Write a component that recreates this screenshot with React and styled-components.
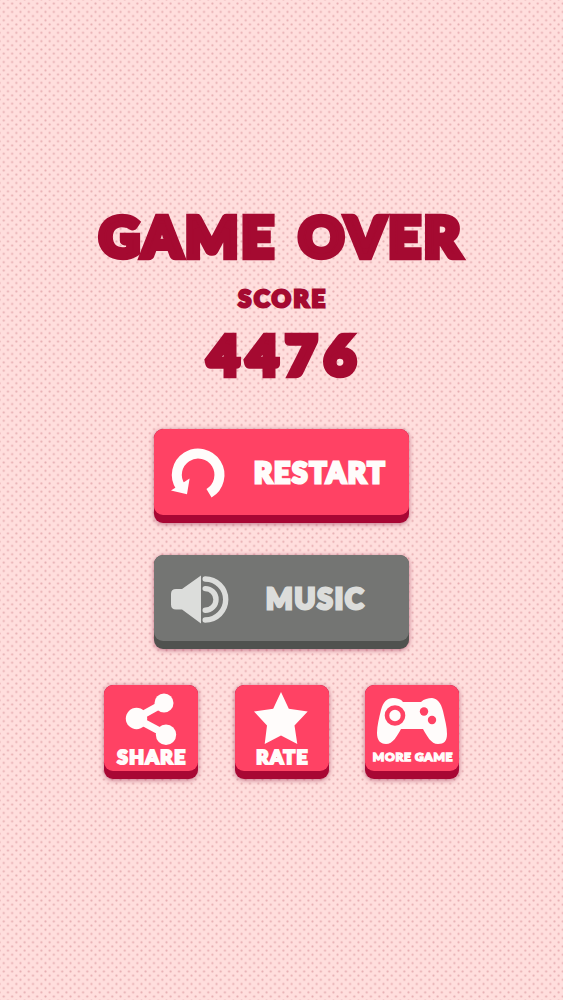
import React from 'react'
import styled, { createGlobalStyle } from 'styled-components'

const GlobalStyle = createGlobalStyle`
    * {
        box-sizing: border-box;
    }

    body {
        margin: 0;
        background: #ffdedd;
    }
`

function RestartIcon() {
    return (
        <Icon width="54" height="50" viewBox="0 0 54 50">
            <path d="M9.5 39.8 A21.3 21.3 0 1 1 38 46.2" fill="none" stroke="currentColor" strokeWidth="10" />
            <path d="M0 43.5 L18.6 31.5 L16 47.3 Z" fill="currentColor" />
        </Icon>
    )
}

function SpeakerIcon() {
    return (
        <Icon width="57" height="50" viewBox="0 0 57 50">
            <path d="M5 16 H11 L30 2.5 V50.5 L11 36.5 H5 Q0 36.5 0 31.5 V21 Q0 16 5 16 Z" fill="currentColor" />
            <g fill="none" stroke="currentColor" strokeWidth="5.4" strokeLinecap="round">
                <path d="M34.2 15.6 A10.8 10.8 0 0 1 34.2 37.2" />
                <path d="M34.2 6 A20.5 20.5 0 0 1 34.2 47" />
            </g>
        </Icon>
    )
}

function ShareIcon() {
    return (
        <Icon width="50" height="52" viewBox="0 0 50 52">
            <path d="M38 10 L10 25.5 L40 41.5" fill="none" stroke="currentColor" strokeWidth="7.5" />
            <circle cx="38" cy="10" r="9.5" fill="currentColor" />
            <circle cx="10.5" cy="25.5" r="10.7" fill="currentColor" />
            <circle cx="40" cy="41.7" r="10.2" fill="currentColor" />
        </Icon>
    )
}

function StarIcon() {
    return (
        <Icon width="54" height="52" viewBox="0 0 54 52">
            <path d="M27 -1 L34.8 15.8 L53.7 18.5 L40.5 32.5 L43.3 51 L27 42.5 L10.7 51 L13 32.5 L0 18.5 L19.2 15.8 Z" fill="currentColor" />
        </Icon>
    )
}

function GamepadIcon() {
    return (
        <Icon width="70" height="47" viewBox="0 0 70 47">
            <path
                d="M16 0 C20 0 24 1 26 4 H44 C47 1 51 0 55 0 C61 1 64 5 66 13 C68 22 70 29 70 36 C70 43 67 46 61 46 C54 46 50 38 46 31 H24 C20 38 16 46 9 46 C3 46 0 42 0 35 C0 28 2 20 4 12 C6 4 10 0 16 0 Z"
                fill="currentColor"
            />
            <circle cx="18" cy="17.5" r="8" fill="none" stroke="#ff4264" strokeWidth="4.6" />
            <circle cx="47" cy="13.5" r="4.2" fill="#ff4264" />
            <circle cx="55" cy="22" r="4.2" fill="#ff4264" />
        </Icon>
    )
}

function App() {
    return (
        <Page>
            <GlobalStyle />
            <Title>GAME OVER</Title>
            <ScoreLabel>SCORE</ScoreLabel>
            <ScoreValue>4476</ScoreValue>
            <Actions>
                <WideButton>
                    <IconSlot>
                        <RestartIcon />
                    </IconSlot>
                    <WideLabel $left={26}>RESTART</WideLabel>
                </WideButton>
                <WideButton $muted>
                    <IconSlot>
                        <SpeakerIcon />
                    </IconSlot>
                    <WideLabel $left={38}>MUSIC</WideLabel>
                </WideButton>
            </Actions>
            <Tiles>
                <Tile>
                    <TileIcon $top={8} $left={-1}>
                        <ShareIcon />
                    </TileIcon>
                    <TileLabel>SHARE</TileLabel>
                </Tile>
                <Tile>
                    <TileIcon $top={8} $left={-1}>
                        <StarIcon />
                    </TileIcon>
                    <TileLabel>RATE</TileLabel>
                </Tile>
                <Tile>
                    <TileIcon $top={13}>
                        <GamepadIcon />
                    </TileIcon>
                    <TileLabel $small>MORE GAME</TileLabel>
                </Tile>
            </Tiles>
        </Page>
    )
}

const Page = styled.main`
    width: 563px;
    height: 1000px;
    padding-top: 207px;
    display: flex;
    flex-direction: column;
    align-items: center;
    overflow: hidden;
    background-color: #ffdedd;
    background-image:
        radial-gradient(circle, #e6adb1 0.5px, transparent 1.5px),
        radial-gradient(circle, #e6adb1 0.5px, transparent 1.5px);
    background-size: 8.35px 8.35px;
    background-position: -0.4px -0.6px, 3.8px 3.6px;
    font-family: Lato, 'Liberation Sans', sans-serif;
    font-weight: 900;
`

const Heading = styled.div`
    color: #a50a31;
    white-space: nowrap;
`

const Title = styled(Heading)`
    height: 60px;
    line-height: 57px;
    font-size: 55.5px;
    letter-spacing: 3.6px;
    word-spacing: 5px;
    -webkit-text-stroke: 6.5px #a50a31;
`

const ScoreLabel = styled(Heading)`
    height: 34px;
    margin-top: 15px;
    margin-left: 3px;
    line-height: 33px;
    font-size: 23.5px;
    letter-spacing: 2.7px;
    -webkit-text-stroke: 2.8px #a50a31;
`

const ScoreValue = styled(Heading)`
    height: 60px;
    margin-top: 9px;
    margin-left: 8px;
    line-height: 59px;
    font-size: 54px;
    letter-spacing: 7.5px;
    -webkit-text-stroke: 6.5px #a50a31;
`

const Actions = styled.div`
    margin-top: 44px;
    display: flex;
    flex-direction: column;
    gap: 32px;
`

const Face = styled.button`
    position: relative;
    padding: 0;
    border: 0;
    border-radius: 9px;
    background: #a80734;
    color: #fffcfb;
    font: inherit;
    box-shadow: 0 1px 5px rgba(150, 40, 75, 0.6);

    &::before {
        content: '';
        position: absolute;
        inset: 0 0 8px;
        border-radius: 9px;
        background: #ff4264;
    }

    > * {
        position: relative;
    }
`

const WideButton = styled(Face)`
    width: 255px;
    height: 94px;
    padding: 0 0 8px 17px;
    display: flex;
    align-items: center;
    color: ${({ $muted }) => ($muted ? '#dcdddb' : '#fffcfb')};
    background: ${({ $muted }) => ($muted ? '#50524f' : '#a80734')};

    &::before {
        background: ${({ $muted }) => ($muted ? '#747573' : '#ff4264')};
    }
`

const Icon = styled.svg`
    display: block;
    overflow: visible;
`

const IconSlot = styled.span`
    width: 57px;
`

const WideLabel = styled.span`
    margin-left: ${({ $left }) => $left}px;
    font-size: 28px;
    line-height: 34px;
    letter-spacing: 1.9px;
    -webkit-text-stroke: 3px currentColor;
`

const Tiles = styled.div`
    margin-top: 36px;
    display: flex;
    gap: 36.5px;
`

const Tile = styled(Face)`
    width: 94px;
    height: 94px;
    display: flex;
    flex-direction: column;
    align-items: center;
`

const TileIcon = styled.span`
    height: ${({ $top }) => 61 - $top}px;
    margin-top: ${({ $top }) => $top}px;
    margin-left: ${({ $left = 0 }) => $left}px;
`

const TileLabel = styled.span`
    height: 22px;
    margin-left: 2px;
    line-height: ${({ $small }) => ($small ? 21 : 22)}px;
    white-space: nowrap;
    font-size: ${({ $small }) => ($small ? 12 : 19)}px;
    letter-spacing: ${({ $small }) => ($small ? 0.7 : 1.5)}px;
    -webkit-text-stroke: ${({ $small }) => ($small ? 1.4 : 2.2)}px currentColor;
`

export default App
